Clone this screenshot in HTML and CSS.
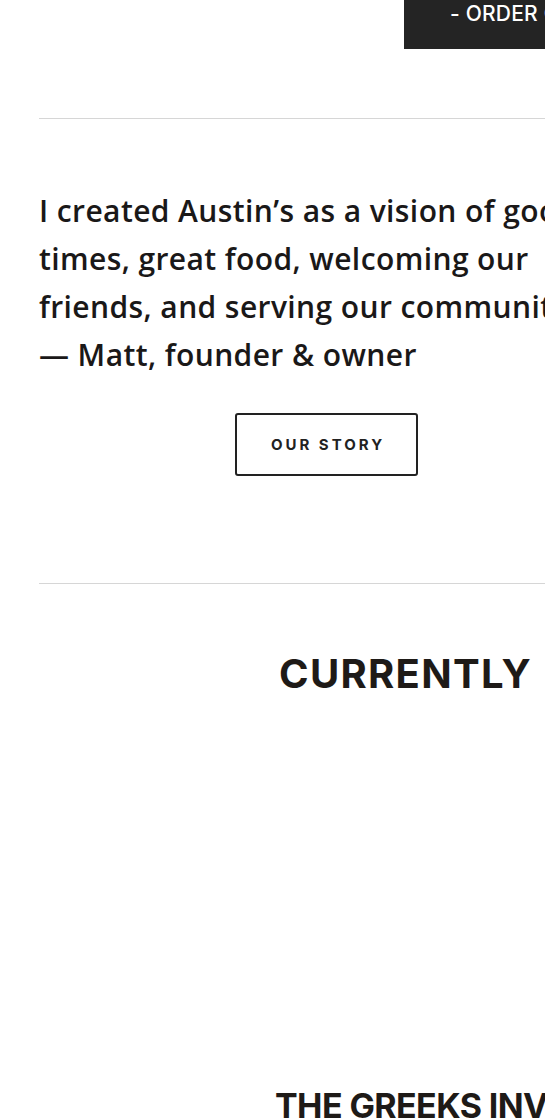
FILE: index.html
```html
<!DOCTYPE html>
<html lang="en">
<head>
<meta charset="utf-8">
<title>Austin's</title>
<link rel="stylesheet" href="styles.css">
</head>
<body>
<div class="page">
  <header class="topbar">
    <a class="order-btn" href="#">- ORDER ONLINE -</a>
  </header>
  <main class="container">
    <hr class="rule rule-top">
    <section class="story">
      <p class="quote">I created Austin’s as a vision of good<br>times, great food, welcoming our<br>friends, and serving our community.<br>— Matt, founder &amp; owner</p>
      <div class="story-action">
        <a class="outline-btn" href="#">OUR STORY</a>
      </div>
    </section>
    <hr class="rule rule-bottom">
    <section class="menu">
      <h2 class="menu-title">CURRENTLY ON TAP</h2>
      <div class="menu-media"></div>
      <h3 class="menu-item">THE GREEKS INVENTED BEER</h3>
    </section>
  </main>
</div>
</body>
</html>
```
FILE: styles.css
```css
html, body {
  margin: 0;
  padding: 0;
  overflow: hidden;
  background: #ffffff;
}
.page {
  width: 900px;
  color: #1c1a19;
}
.topbar {
  display: flex;
  padding-left: 404px;
  height: 49px;
}
.order-btn {
  display: block;
  background: #242424;
  color: #ffffff;
  text-decoration: none;
  font-family: "Inter", sans-serif;
  font-weight: 500;
  font-size: 21px;
  line-height: 27px;
  letter-spacing: 0.2px;
  padding: 0 40px 22px 46px;
  white-space: nowrap;
  height: 27px;
}
.container {
  margin-left: 39px;
  width: 575px;
}
.rule {
  border: 0;
  height: 1px;
  background: #d6d6d6;
  margin: 0;
  width: 900px;
}
.rule-top {
  margin-top: 69px;
}
.story {
  padding-top: 68px;
}
.quote {
  margin: 0;
  font-family: "Open Sans", sans-serif;
  font-weight: 600;
  font-size: 30px;
  line-height: 48px;
  letter-spacing: 0.4px;
  white-space: nowrap;
  color: #1a1818;
}
.story-action {
  display: flex;
  justify-content: center;
  padding-top: 34px;
  padding-bottom: 107px;
}
.outline-btn {
  display: flex;
  align-items: center;
  justify-content: center;
  box-sizing: border-box;
  width: 183px;
  height: 63px;
  border: 2px solid #222222;
  border-radius: 3px;
  font-family: "Inter", sans-serif;
  font-weight: 700;
  font-size: 15px;
  letter-spacing: 3px;
  color: #222222;
  text-decoration: none;
  padding-left: 3px;
}
.menu {
  padding-left: 240px;
  padding-top: 65px;
}
.menu-title {
  margin: 0;
  font-family: "Inter", sans-serif;
  font-weight: 700;
  font-size: 40px;
  line-height: 49px;
  letter-spacing: 1.3px;
  word-spacing: 6px;
  white-space: nowrap;
  color: #1e1a17;
}
.menu-media {
  height: 388px;
}
.menu-item {
  margin: 0;
  margin-left: -4px;
  font-family: "Inter", sans-serif;
  font-weight: 700;
  font-size: 34px;
  line-height: 40px;
  letter-spacing: -0.6px;
  white-space: nowrap;
  color: #1e1a17;
}
```
